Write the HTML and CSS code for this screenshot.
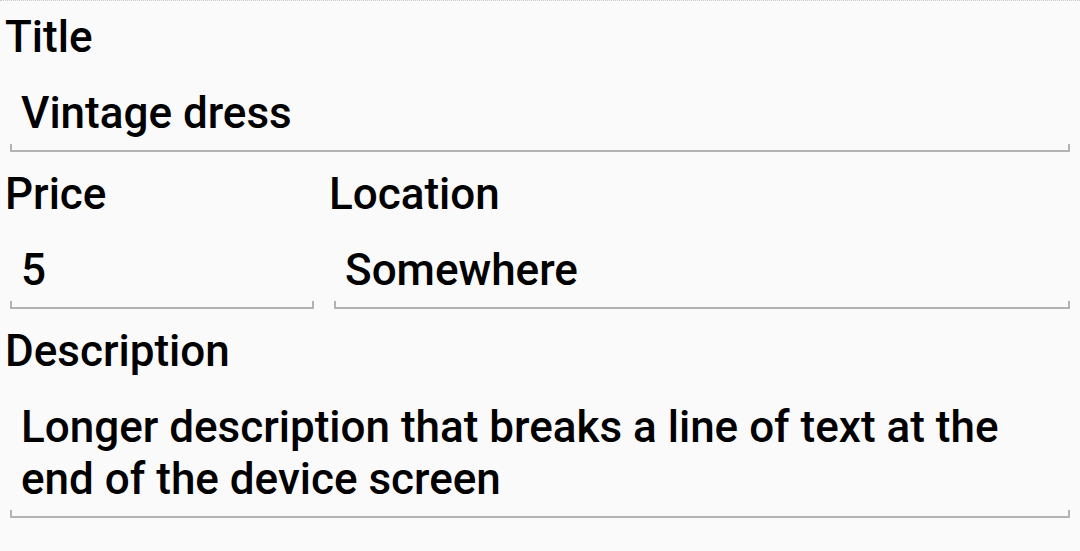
FILE: index.html
```html
<!DOCTYPE html>
<html>
<head>
<meta charset="utf-8">
<link rel="stylesheet" href="styles.css">
</head>
<body>
<div class="screen">
  <form class="form">
    <div class="field">
      <div class="label">Title</div>
      <div class="input">Vintage dress</div>
    </div>
    <div class="row">
      <div class="field">
        <div class="label">Price</div>
        <div class="input">5</div>
      </div>
      <div class="field">
        <div class="label">Location</div>
        <div class="input">Somewhere</div>
      </div>
    </div>
    <div class="field">
      <div class="label">Description</div>
      <div class="input">Longer description that breaks a line of text at the end of the device screen</div>
    </div>
  </form>
</div>
</body>
</html>
```
FILE: styles.css
```css
html, body {
  margin: 0;
  padding: 0;
  background: #fafafa;
}
body {
  width: 1080px;
  height: 551px;
  overflow: hidden;
  font-family: Roboto, "Noto Sans", sans-serif;
  color: #000;
}
.screen {
  border-top: 1px dotted #c8c8c8;
  height: 550px;
}
.form {
  display: flex;
  flex-direction: column;
  gap: 16px;
  padding: 10px 10px 0 5px;
}
.row {
  display: grid;
  grid-template-columns: 309px 1fr;
  gap: 15px;
}
.field {
  display: flex;
  flex-direction: column;
}
.label {
  font-size: 44px;
  font-weight: 500;
  line-height: 52px;
}
.input {
  margin-top: 24px;
  margin-left: 5px;
  padding: 0 0 11px 11px;
  font-size: 44px;
  font-weight: 500;
  line-height: 52px;
  border-bottom: 2px solid #b3b3b3;
  background-image: linear-gradient(#b3b3b3, #b3b3b3), linear-gradient(#b3b3b3, #b3b3b3);
  background-size: 2px 6px, 2px 6px;
  background-position: left bottom, right bottom;
  background-repeat: no-repeat;
}
```
